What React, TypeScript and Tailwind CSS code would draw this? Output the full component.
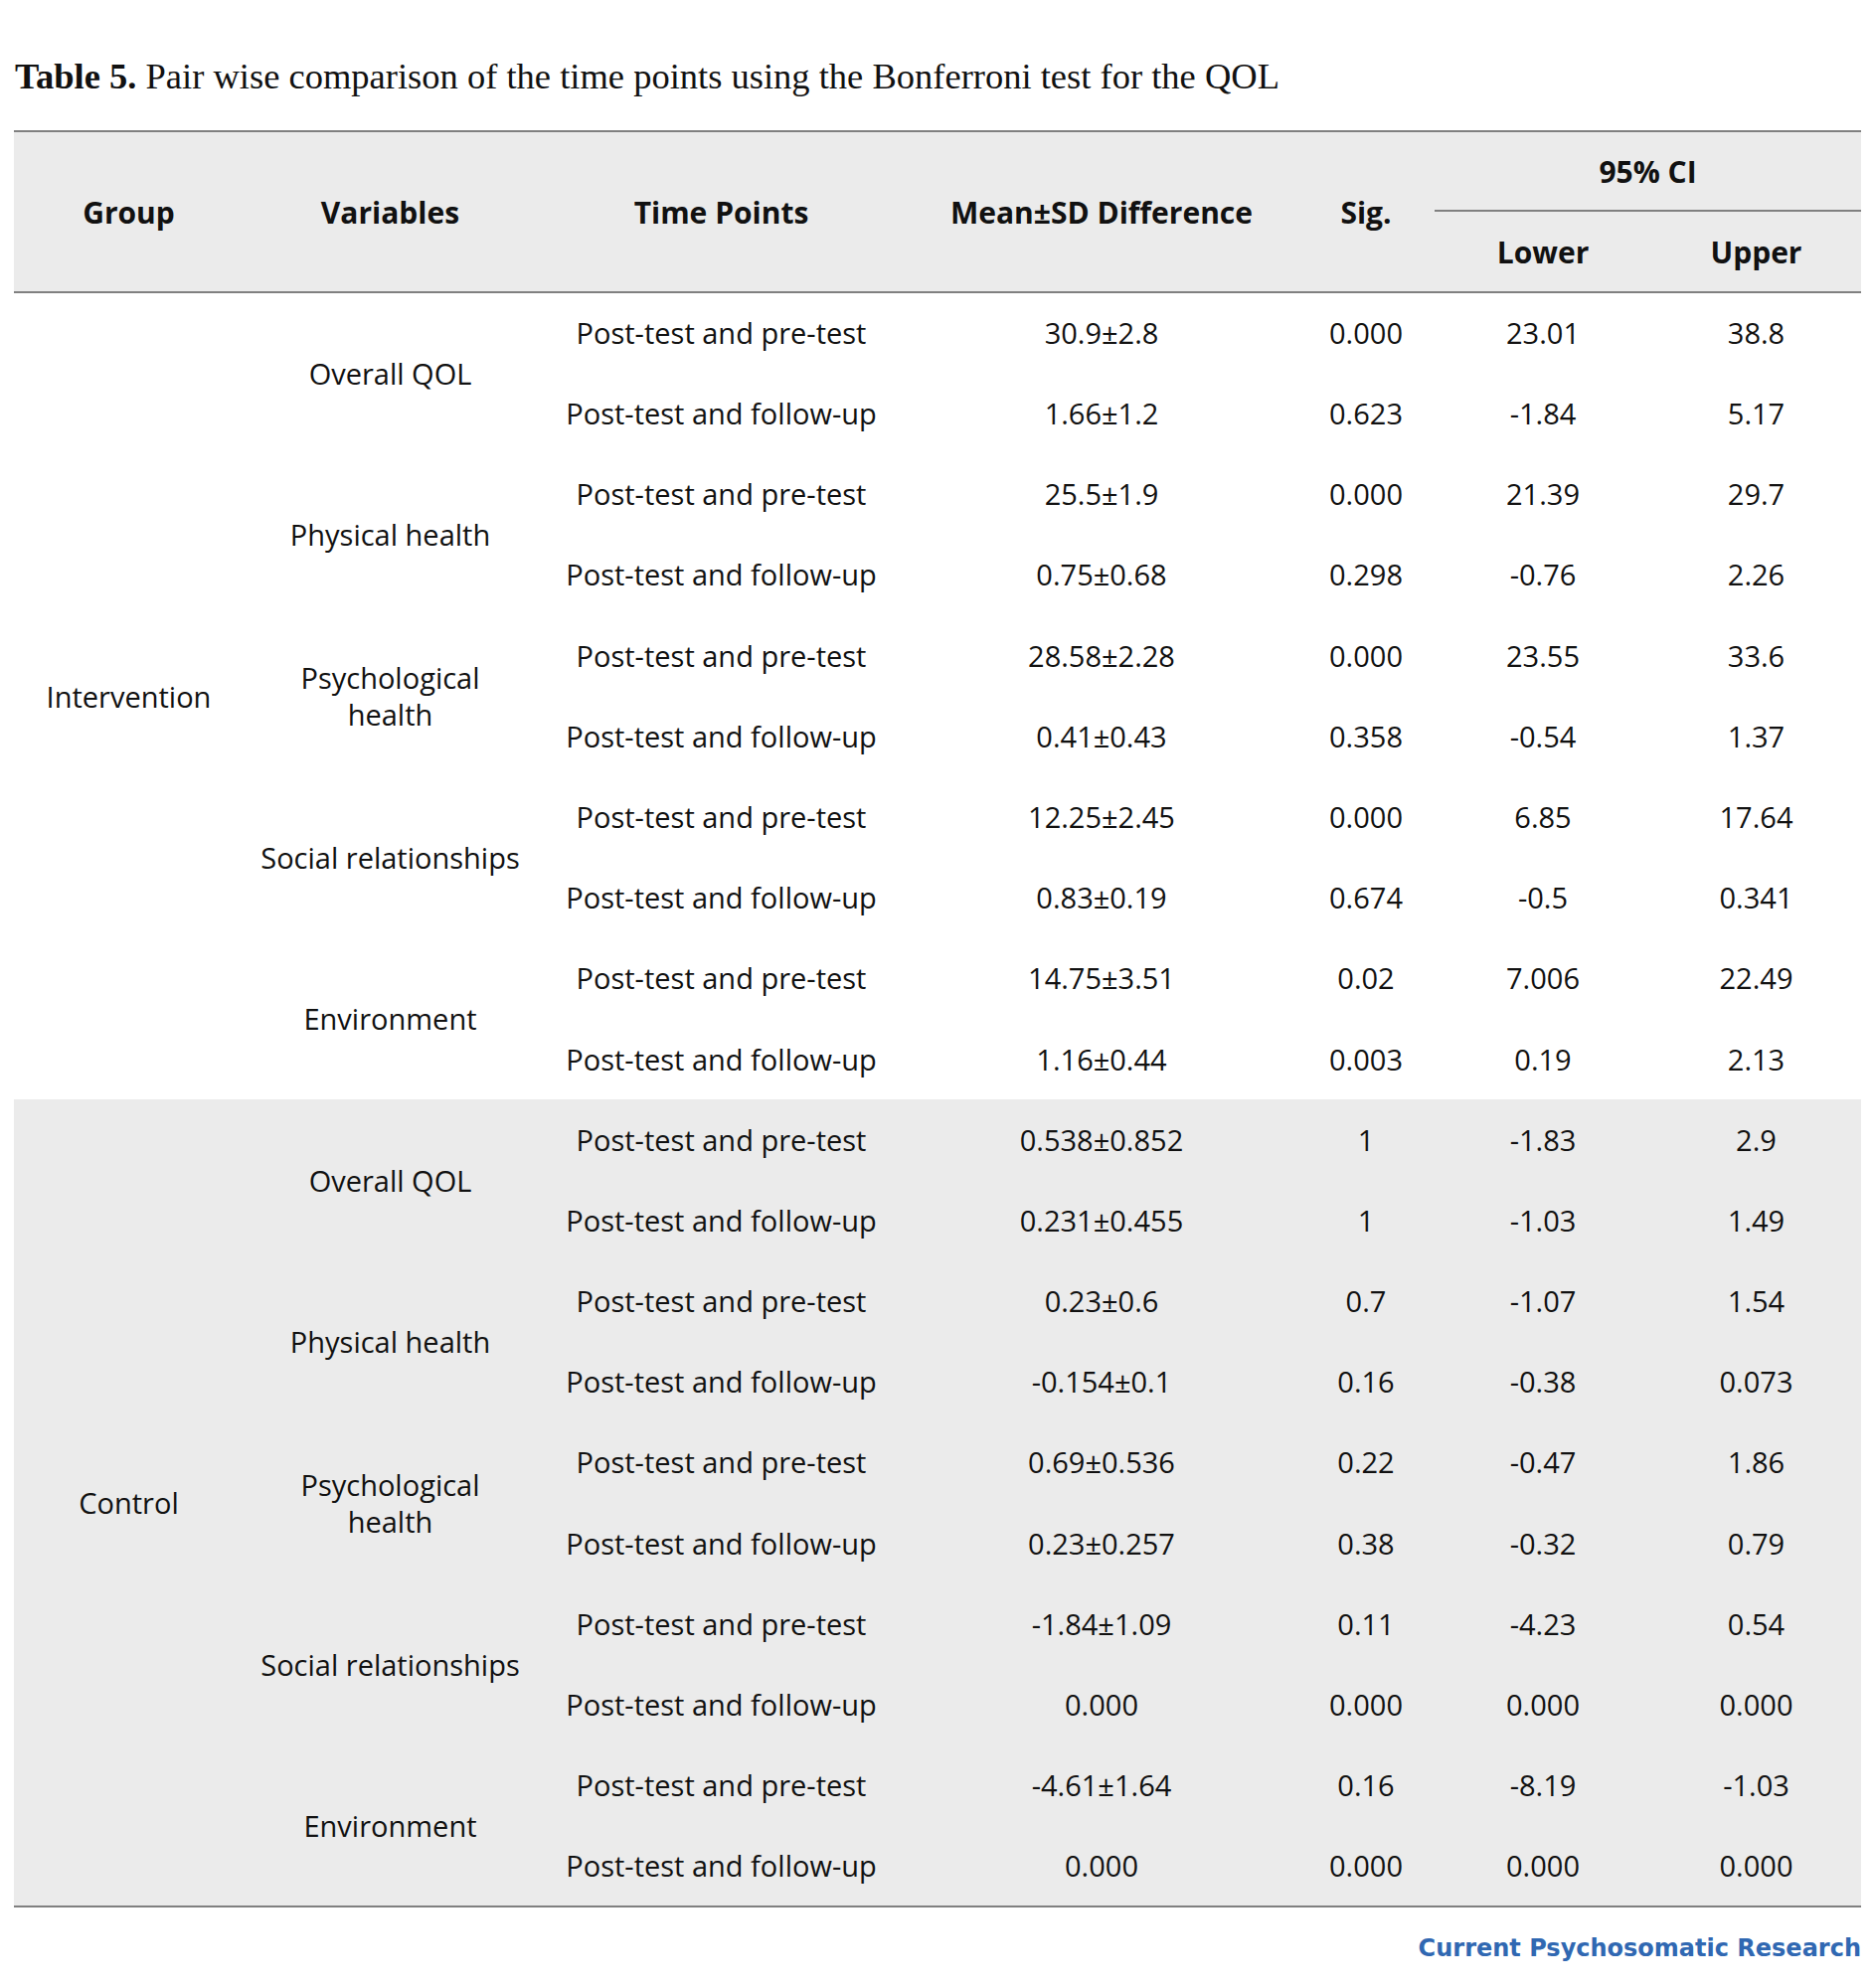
import React from 'react'

type Row = { time: string; mean: string; sig: string; lower: string; upper: string }
type Variable = { name: React.ReactNode; rows: Row[] }
type Group = { name: string; shaded: boolean; variables: Variable[] }

const PRE = 'Post-test and pre-test'
const FOL = 'Post-test and follow-up'

const groups: Group[] = [
    {
        name: 'Intervention',
        shaded: false,
        variables: [
            { name: 'Overall QOL', rows: [
                { time: PRE, mean: '30.9±2.8', sig: '0.000', lower: '23.01', upper: '38.8' },
                { time: FOL, mean: '1.66±1.2', sig: '0.623', lower: '-1.84', upper: '5.17' },
            ] },
            { name: 'Physical health', rows: [
                { time: PRE, mean: '25.5±1.9', sig: '0.000', lower: '21.39', upper: '29.7' },
                { time: FOL, mean: '0.75±0.68', sig: '0.298', lower: '-0.76', upper: '2.26' },
            ] },
            { name: <>Psychological<br />health</>, rows: [
                { time: PRE, mean: '28.58±2.28', sig: '0.000', lower: '23.55', upper: '33.6' },
                { time: FOL, mean: '0.41±0.43', sig: '0.358', lower: '-0.54', upper: '1.37' },
            ] },
            { name: 'Social relationships', rows: [
                { time: PRE, mean: '12.25±2.45', sig: '0.000', lower: '6.85', upper: '17.64' },
                { time: FOL, mean: '0.83±0.19', sig: '0.674', lower: '-0.5', upper: '0.341' },
            ] },
            { name: 'Environment', rows: [
                { time: PRE, mean: '14.75±3.51', sig: '0.02', lower: '7.006', upper: '22.49' },
                { time: FOL, mean: '1.16±0.44', sig: '0.003', lower: '0.19', upper: '2.13' },
            ] },
        ],
    },
    {
        name: 'Control',
        shaded: true,
        variables: [
            { name: 'Overall QOL', rows: [
                { time: PRE, mean: '0.538±0.852', sig: '1', lower: '-1.83', upper: '2.9' },
                { time: FOL, mean: '0.231±0.455', sig: '1', lower: '-1.03', upper: '1.49' },
            ] },
            { name: 'Physical health', rows: [
                { time: PRE, mean: '0.23±0.6', sig: '0.7', lower: '-1.07', upper: '1.54' },
                { time: FOL, mean: '-0.154±0.1', sig: '0.16', lower: '-0.38', upper: '0.073' },
            ] },
            { name: <>Psychological<br />health</>, rows: [
                { time: PRE, mean: '0.69±0.536', sig: '0.22', lower: '-0.47', upper: '1.86' },
                { time: FOL, mean: '0.23±0.257', sig: '0.38', lower: '-0.32', upper: '0.79' },
            ] },
            { name: 'Social relationships', rows: [
                { time: PRE, mean: '-1.84±1.09', sig: '0.11', lower: '-4.23', upper: '0.54' },
                { time: FOL, mean: '0.000', sig: '0.000', lower: '0.000', upper: '0.000' },
            ] },
            { name: 'Environment', rows: [
                { time: PRE, mean: '-4.61±1.64', sig: '0.16', lower: '-8.19', upper: '-1.03' },
                { time: FOL, mean: '0.000', sig: '0.000', lower: '0.000', upper: '0.000' },
            ] },
        ],
    },
]

export default function App() {
    const cell = 'h-[81.2px] p-0 text-center align-middle'

    return (
        <div className="min-h-[2000px] bg-white pl-[14px] pt-[55px] text-[#111]">
            <h1 className="pl-[1px] font-['Liberation_Serif',serif] text-[36.5px] leading-[44px] text-[#111]">
                <span className="font-bold">Table 5.</span> Pair wise comparison of the time points using the Bonferroni test for the QOL
            </h1>

            <table className="mt-[32px] w-[1858px] table-fixed border-collapse border-y-2 border-[#808080] font-['Open_Sans',sans-serif] text-[29px]">
                <colgroup>
                    <col className="w-[231px]" />
                    <col className="w-[295px]" />
                    <col className="w-[371px]" />
                    <col className="w-[394px]" />
                    <col className="w-[138px]" />
                    <col className="w-[218px]" />
                    <col className="w-[211px]" />
                </colgroup>
                <thead className="bg-[#ebebeb] text-[30px] font-bold">
                    <tr>
                        <th rowSpan={2} className="p-0 text-center align-middle">Group</th>
                        <th rowSpan={2} className="p-0 text-center align-middle">Variables</th>
                        <th rowSpan={2} className="p-0 text-center align-middle">Time Points</th>
                        <th rowSpan={2} className="p-0 text-center align-middle">Mean±SD Difference</th>
                        <th rowSpan={2} className="p-0 text-center align-middle">Sig.</th>
                        <th colSpan={2} className="h-[80px] border-b-2 border-[#808080] p-0 text-center align-middle">95% CI</th>
                    </tr>
                    <tr className="border-b-2 border-[#808080]">
                        <th className="h-[82px] p-0 text-center align-middle">Lower</th>
                        <th className="h-[82px] p-0 text-center align-middle">Upper</th>
                    </tr>
                </thead>
                {groups.map((g) => (
                    <tbody key={g.name} className={g.shaded ? 'bg-[#ebebeb]' : 'bg-white'}>
                        {g.variables.map((v, vi) =>
                            v.rows.map((r, ri) => (
                                <tr key={`${vi}-${ri}`}>
                                    {vi === 0 && ri === 0 && (
                                        <td rowSpan={10} className="p-0 text-center align-middle">{g.name}</td>
                                    )}
                                    {ri === 0 && (
                                        <td rowSpan={2} className="p-0 text-center align-middle leading-[37px]">{v.name}</td>
                                    )}
                                    <td className={cell}>{r.time}</td>
                                    <td className={cell}>{r.mean}</td>
                                    <td className={cell}>{r.sig}</td>
                                    <td className={cell}>{r.lower}</td>
                                    <td className={cell}>{r.upper}</td>
                                </tr>
                            ))
                        )}
                    </tbody>
                ))}
            </table>

            <div className="flex w-[1858px] justify-end pt-[26px]">
                <span className="font-['DejaVu_Sans',sans-serif] text-[24px] font-bold leading-[30px] text-[#3068b2]">
                    Current Psychosomatic Research
                </span>
            </div>
        </div>
    )
}
